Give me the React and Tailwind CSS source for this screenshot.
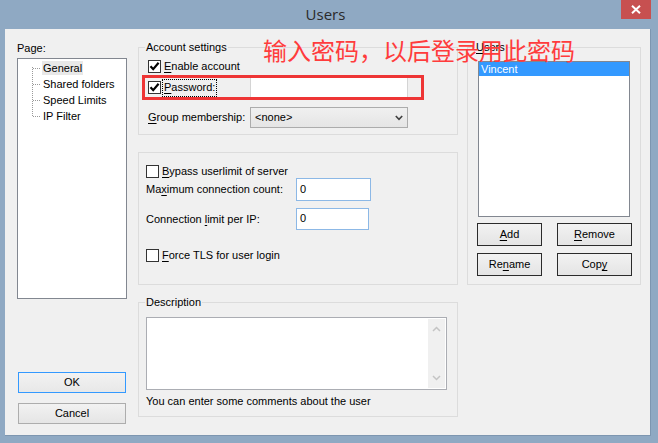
import React from "react";

function Check({ checked }) {
  return (
    <span className="w-[13px] h-[13px] border border-[#333] bg-white flex items-center justify-center shrink-0">
      {checked && (
        <svg width="11" height="11" viewBox="0 0 11 11">
          <path d="M1.5 5.2 L4.2 8.2 L9.6 1.8" stroke="#000" strokeWidth="2.2" fill="none" />
        </svg>
      )}
    </span>
  );
}

function U({ children }) {
  return <span className="underline underline-offset-[2px]">{children}</span>;
}

function Btn({ children, w, border = "border-[#2b2b2b]" }) {
  return (
    <div
      className={`${w} h-[23px] border ${border} bg-gradient-to-b from-[#f2f2f2] to-[#e4e4e4] flex items-center justify-center leading-[13px]`}
    >
      {children}
    </div>
  );
}

function Title({ children, ml = "ml-[6px]" }) {
  return (
    <div className={`-mt-[7px] ${ml} px-[1px] bg-[#f0f0f0] w-fit h-[13px] leading-[13px]`}>{children}</div>
  );
}

export default function App() {
  return (
    <div className="w-[658px] h-[443px] bg-[#8fa9c3] flex flex-col font-['Liberation_Sans',Arial,sans-serif] text-[11px] text-black overflow-hidden">
      {/* title bar */}
      <div className="h-[29px] flex shrink-0">
        <div className="flex-1" />
        <div className="pt-[4px] text-[15px] leading-[20px] text-[#2a2a2a] font-['Open_Sans','Noto_Sans',sans-serif]">
          Users
        </div>
        <div className="flex-1 flex justify-end pr-[7px]">
          <div className="w-[30px] h-[19px] bg-[#c75050] flex items-center justify-center">
            <svg width="10" height="9" viewBox="0 0 10 9">
              <path d="M1 0.8 L9 8.2 M9 0.8 L1 8.2" stroke="#fff" strokeWidth="2" />
            </svg>
          </div>
        </div>
      </div>

      {/* client area */}
      <div className="relative ml-[5px] w-[646px] h-[407px] bg-[#f0f0f0] border-r border-b border-[#7d96b0] flex items-start">
        {/* left column */}
        <div className="ml-[12px] w-[110px] flex flex-col">
          <div className="mt-[13px] h-[13px] leading-[13px]">Page:</div>
          <div className="mt-[3px] h-[241px] border border-[#828790] bg-white flex flex-col">
            <div className="mt-[1px] flex">
              <svg width="10" height="64" viewBox="0 0 10 64" className="ml-[14px] shrink-0">
                <g stroke="#9a9a9a" strokeWidth="1" strokeDasharray="1 1" fill="none">
                  <path d="M0.5 7 L0.5 57" />
                  <path d="M1 8.5 L9 8.5" />
                  <path d="M1 24.5 L9 24.5" />
                  <path d="M1 40.5 L9 40.5" />
                  <path d="M1 56.5 L9 56.5" />
                </g>
              </svg>
              <div className="flex flex-col">
                <div className="h-[16px] flex items-center">
                  <span className="bg-[#e8e8e8] px-[1px] h-[14px] leading-[14px]">General</span>
                </div>
                <div className="h-[16px] flex items-center px-[1px]">Shared folders</div>
                <div className="h-[16px] flex items-center px-[1px]">Speed Limits</div>
                <div className="h-[16px] flex items-center px-[1px]">IP Filter</div>
              </div>
            </div>
          </div>
          <div className="mt-[73px] mx-[1px] h-[21px] border border-[#3399ff] bg-gradient-to-b from-[#f2f2f2] to-[#e8e8e8] flex items-center justify-center">
            OK
          </div>
          <div className="mt-[10px] mx-[1px] h-[21px] border border-[#adadad] bg-gradient-to-b from-[#f2f2f2] to-[#e5e5e5] flex items-center justify-center">
            Cancel
          </div>
        </div>

        {/* middle column */}
        <div className="ml-[11px] w-[320px] flex flex-col">
          {/* account settings */}
          <div className="relative mt-[18px] h-[88px] border border-[#dcdcdc] flex flex-col">
            <Title>Account settings</Title>
            <div className="mt-[6px] ml-[9px] h-[13px] flex items-center gap-[3px]">
              <Check checked />
              <span className="leading-[13px]">
                <U>E</U>nable account
              </span>
            </div>
            <div className="mt-[4px] ml-[9px] h-[21px] flex items-center">
              <div className="w-[102px] flex items-center gap-[1px]">
                <Check checked />
                <span className="h-[18px] border border-dotted border-black px-[1px] flex items-center leading-[13px]">
                  <U>P</U>assword:
                </span>
              </div>
              <div className="w-[158px] h-[21px] bg-white border border-[#d4d4d4]" />
            </div>
            <div className="mt-[9px] ml-[9px] h-[21px] flex items-center">
              <div className="w-[102px] leading-[13px]">
                <U>G</U>roup membership:
              </div>
              <div className="w-[158px] h-[21px] border border-[#acacac] bg-gradient-to-b from-[#f0f0f0] to-[#e5e5e5] flex items-center pl-[4px] pr-[4px]">
                <span className="flex-1 leading-[13px]">&lt;none&gt;</span>
                <svg width="8" height="6" viewBox="0 0 8 6">
                  <path d="M0.8 1 L4 4.4 L7.2 1" stroke="#404040" strokeWidth="1.6" fill="none" />
                </svg>
              </div>
            </div>
            {/* red annotation box */}
            <div className="absolute left-[3px] top-[27px] w-[282px] h-[25px] border-[3px] border-[#ee3535]" />
          </div>

          {/* limits */}
          <div className="mt-[17px] h-[133px] border border-[#dcdcdc] flex flex-col pl-[7px]">
            <div className="mt-[12px] h-[13px] flex items-center gap-[3px]">
              <Check />
              <span className="leading-[13px]">
                <U>B</U>ypass userlimit of server
              </span>
            </div>
            <div className="h-[23px] flex items-center">
              <div className="w-[150px] leading-[13px]">
                Ma<U>x</U>imum connection count:
              </div>
              <div className="w-[75px] h-[23px] bg-white border border-[#8cb8e6] pl-[3px] pt-[4px] leading-[13px]">0</div>
            </div>
            <div className="mt-[7px] h-[22px] flex items-center">
              <div className="w-[150px] leading-[13px]">
                Connection <U>l</U>imit per IP:
              </div>
              <div className="w-[73px] h-[22px] bg-white border border-[#8cb8e6] pl-[3px] pt-[3px] leading-[13px]">0</div>
            </div>
            <div className="mt-[19px] h-[13px] flex items-center gap-[3px]">
              <Check />
              <span className="leading-[13px]">
                <U>F</U>orce TLS for user login
              </span>
            </div>
          </div>

          {/* description */}
          <div className="mt-[17px] h-[115px] border border-[#dcdcdc] flex flex-col">
            <Title>Description</Title>
            <div className="mt-[8px] ml-[7px] w-[301px] h-[73px] border border-[#abadb3] bg-white flex justify-end p-[1px]">
              <div className="w-[17px] bg-[#f0f0f0] flex flex-col justify-between items-center py-[7px]">
                <svg width="9" height="6" viewBox="0 0 9 6">
                  <path d="M1 5 L4.5 1.5 L8 5" stroke="#c4c4c4" strokeWidth="1.5" fill="none" />
                </svg>
                <svg width="9" height="6" viewBox="0 0 9 6">
                  <path d="M1 1 L4.5 4.5 L8 1" stroke="#c4c4c4" strokeWidth="1.5" fill="none" />
                </svg>
              </div>
            </div>
            <div className="mt-[5px] ml-[7px] h-[13px] leading-[13px]">You can enter some comments about the user</div>
          </div>
        </div>

        {/* right column */}
        <div className="ml-[9px] mt-[18px] w-[174px] h-[238px] border border-[#dcdcdc] flex flex-col">
          <Title ml="ml-[7px]">
            <U>U</U>sers
          </Title>
          <div className="mt-[7px] ml-[10px] w-[152px] h-[156px] border border-[#828790] bg-white flex flex-col">
            <div className="h-[14px] bg-[#3399ff] text-white leading-[14px] pl-[2px]">Vincent</div>
          </div>
          <div className="mt-[6px] ml-[9px] flex gap-[15px]">
            <Btn w="w-[65px]">
              <U>A</U>dd
            </Btn>
            <Btn w="w-[75px]">
              <U>R</U>emove
            </Btn>
          </div>
          <div className="mt-[7px] ml-[9px] flex gap-[15px]">
            <Btn w="w-[65px]">
              Re<U>n</U>ame
            </Btn>
            <Btn w="w-[75px]">
              Cop<U>y</U>
            </Btn>
          </div>
        </div>

        {/* Chinese annotation overlay */}
        <div className="absolute left-[258px] top-[8px] text-[24px] leading-[26px] text-[#ff3c3c] whitespace-nowrap font-['Noto_Sans_CJK_SC',sans-serif]">
          输入密码，以后登录用此密码
        </div>
      </div>
    </div>
  );
}
